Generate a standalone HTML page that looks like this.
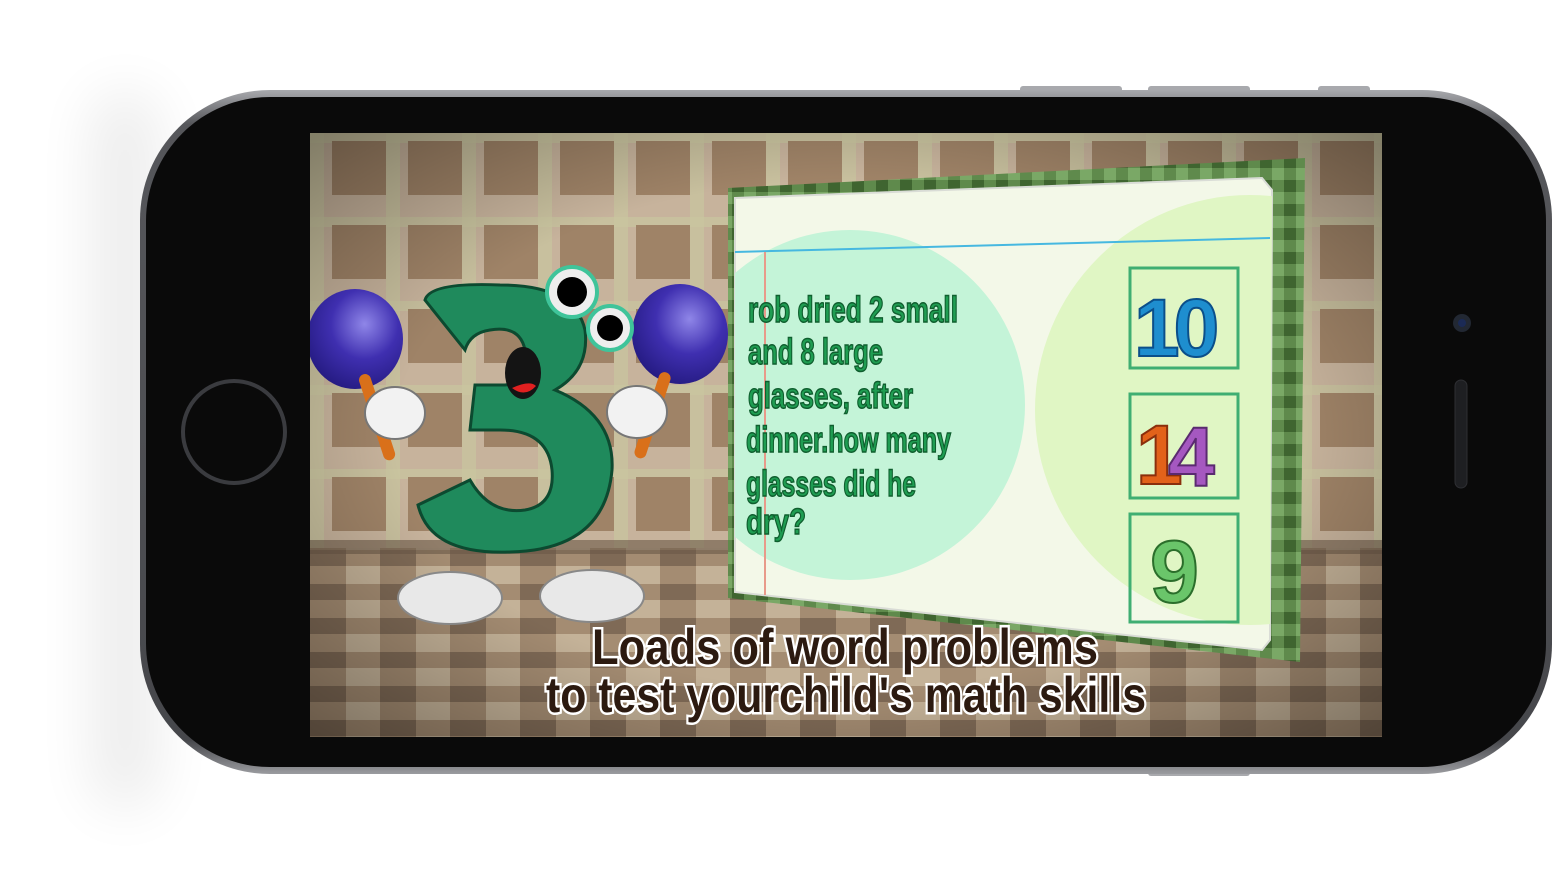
<!DOCTYPE html>
<html><head><meta charset="utf-8"><style>
html,body{margin:0;padding:0;background:#fff;width:1552px;height:884px;overflow:hidden}
svg{display:block}
</style></head><body>
<svg width="1552" height="884" viewBox="0 0 1552 884" xmlns="http://www.w3.org/2000/svg">
<defs>
<linearGradient id="body" x1="0" y1="0" x2="0" y2="1">
<stop offset="0" stop-color="#a8a9ad"/><stop offset="0.05" stop-color="#56575b"/><stop offset="0.95" stop-color="#46474b"/><stop offset="1" stop-color="#9a9b9f"/>
</linearGradient>
<pattern id="plaid" x="310" y="133" width="76" height="84" patternUnits="userSpaceOnUse">
<rect width="76" height="84" fill="#c7b39c"/>
<rect x="0" y="0" width="14" height="84" fill="#c9c6a0" opacity="0.7"/>
<rect x="0" y="0" width="76" height="10" fill="#c9c6a0" opacity="0.7"/>
<rect x="22" y="8" width="54" height="54" fill="#9f8367"/>
</pattern>
<pattern id="floor" x="310" y="550" width="70" height="34" patternUnits="userSpaceOnUse">
<rect width="70" height="34" fill="#a48c72"/>
<rect x="0" y="0" width="36" height="16" fill="#7f6a56"/>
<rect x="36" y="16" width="34" height="18" fill="#c4b298"/>
</pattern>
<pattern id="check" width="24" height="24" patternUnits="userSpaceOnUse">
<rect width="24" height="24" fill="#5f8a4c"/><rect width="12" height="12" fill="#7aa866"/><rect x="12" y="12" width="12" height="12" fill="#3f6530"/>
</pattern>
<radialGradient id="mar" cx="0.6" cy="0.35" r="0.7"><stop offset="0" stop-color="#8f86e8"/><stop offset="0.5" stop-color="#3f2fb0"/><stop offset="1" stop-color="#241a80"/></radialGradient>
<radialGradient id="vig" cx="0.5" cy="0.5" r="0.7"><stop offset="0.6" stop-color="#000" stop-opacity="0"/><stop offset="1" stop-color="#000" stop-opacity="0.35"/></radialGradient>
<filter id="blur" x="-100%" y="-20%" width="300%" height="140%"><feGaussianBlur stdDeviation="28"/></filter>
</defs>
<rect x="90" y="90" width="70" height="720" rx="35" fill="#000" opacity="0.07" filter="url(#blur)"/>
<rect x="1020" y="86" width="102" height="8" rx="3" fill="#a8a9ad"/>
<rect x="1148" y="86" width="102" height="8" rx="3" fill="#a8a9ad"/>
<rect x="1318" y="86" width="52" height="8" rx="3" fill="#a8a9ad"/>
<rect x="1148" y="768" width="102" height="8" rx="3" fill="#a8a9ad"/>
<rect x="140" y="90" width="1412" height="684" rx="130" fill="url(#body)"/>
<rect x="146" y="97" width="1400" height="670" rx="124" fill="#0a0a0a"/>
<circle cx="234" cy="432" r="51" fill="none" stroke="#3a3b3f" stroke-width="4"/>
<circle cx="1462" cy="323" r="9" fill="#222833"/><circle cx="1462" cy="323" r="4" fill="#1b2a55"/>
<rect x="1455" y="380" width="12" height="108" rx="6" fill="#1e1f22" stroke="#2e2f33"/>
<svg x="310" y="133" width="1072" height="604" viewBox="310 133 1072 604">
<rect x="310" y="133" width="1072" height="604" fill="url(#plaid)"/>
<polygon points="310,548 1382,548 1382,737 310,737" fill="url(#floor)"/>
<rect x="310" y="540" width="1072" height="14" fill="#6b5848" opacity="0.6"/>
<rect x="310" y="133" width="1072" height="604" fill="url(#vig)"/>
<polygon points="728,188 1305,158 1300,662 728,598" fill="url(#check)"/>
<polygon points="735,198 1262,178 1272,190 1270,640 1262,650 735,592" fill="#f3f8e8" stroke="#d9dcd6" stroke-width="2"/>
<clipPath id="bc"><polygon points="735,198 1262,178 1272,190 1270,640 1262,650 735,592"/></clipPath>
<g clip-path="url(#bc)">
<circle cx="850" cy="405" r="175" fill="#c4f4d8"/>
<circle cx="1250" cy="410" r="215" fill="#e0f6c4"/>
<line x1="735" y1="252" x2="1270" y2="238" stroke="#46b8e0" stroke-width="2"/>
<line x1="765" y1="252" x2="765" y2="595" stroke="#e89a8a" stroke-width="2"/>
</g>
<g font-family="Liberation Sans Narrow, Liberation Sans, sans-serif" font-weight="bold" fill="#1f9d52" stroke="#0f5e2e" stroke-width="1.5" font-size="36">
<text x="748" y="322" textLength="210" lengthAdjust="spacingAndGlyphs">rob dried 2 small</text>
<text x="748" y="364" textLength="135" lengthAdjust="spacingAndGlyphs">and 8 large</text>
<text x="748" y="408" textLength="165" lengthAdjust="spacingAndGlyphs">glasses, after</text>
<text x="746" y="452" textLength="205" lengthAdjust="spacingAndGlyphs">dinner.how many</text>
<text x="746" y="496" textLength="170" lengthAdjust="spacingAndGlyphs">glasses did he</text>
<text x="746" y="534" textLength="60" lengthAdjust="spacingAndGlyphs">dry?</text>
</g>
<g fill="none" stroke="#3fae72" stroke-width="3">
<rect x="1130" y="268" width="108" height="100"/>
<rect x="1130" y="394" width="108" height="104"/>
<rect x="1130" y="514" width="108" height="108"/>
</g>
<g font-family="Liberation Sans, sans-serif" font-weight="bold" font-size="82">
<text x="1134" y="356" fill="#1e8ecf" stroke="#0b4f8a" stroke-width="2" letter-spacing="-6">10</text>
<text x="1136" y="484" fill="#e2621a" stroke="#8a2f0c" stroke-width="2" font-size="84">1</text>
<text x="1168" y="486" fill="#a558c0" stroke="#5a2a70" stroke-width="2" font-size="84">4</text>
<text x="1150" y="602" fill="#6ac56a" stroke="#2b6e2b" stroke-width="2" font-size="88">9</text>
</g>
<ellipse cx="450" cy="598" rx="52" ry="26" fill="#e8e8e8" stroke="#888" stroke-width="2"/>
<ellipse cx="592" cy="596" rx="52" ry="26" fill="#e8e8e8" stroke="#888" stroke-width="2"/>
<ellipse cx="355" cy="339" rx="48" ry="50" fill="url(#mar)"/>
<ellipse cx="680" cy="334" rx="48" ry="50" fill="url(#mar)"/>
<rect x="372" y="372" width="12" height="90" rx="6" fill="#d9701a" transform="rotate(-18 378 420)"/>
<rect x="645" y="370" width="12" height="90" rx="6" fill="#d9701a" transform="rotate(18 651 420)"/>
<path d="M425,300 Q430,282 500,285 Q575,285 585,330 Q590,370 555,390 Q615,415 612,470 Q605,550 510,552 Q430,555 418,505 L470,480 Q490,515 525,510 Q555,505 552,470 Q548,430 500,430 L470,430 L475,385 L505,385 Q530,382 525,350 Q520,325 490,330 Q470,333 465,350 Z" fill="#1f8a5c" stroke="#0c4a30" stroke-width="3"/>
<ellipse cx="523" cy="373" rx="18" ry="26" fill="#141414"/>
<path d="M512,388 Q525,398 536,386 Q530,380 512,388Z" fill="#e02020"/>
<circle cx="572" cy="292" r="25" fill="#eee" stroke="#3fc49a" stroke-width="4"/><circle cx="572" cy="292" r="15" fill="#000"/>
<circle cx="610" cy="328" r="22" fill="#eee" stroke="#3fc49a" stroke-width="4"/><circle cx="610" cy="328" r="13" fill="#000"/>
<ellipse cx="395" cy="413" rx="30" ry="26" fill="#f2f2f2" stroke="#777" stroke-width="2"/>
<ellipse cx="637" cy="412" rx="30" ry="26" fill="#f2f2f2" stroke="#777" stroke-width="2"/>
<g font-family="Liberation Sans Narrow, Liberation Sans, sans-serif" font-weight="bold" fill="#2c1a10" stroke="#fff" stroke-width="5" paint-order="stroke" font-size="50">
<text x="592" y="664" textLength="506" lengthAdjust="spacingAndGlyphs">Loads of word problems</text>
<text x="546" y="712" textLength="600" lengthAdjust="spacingAndGlyphs">to test yourchild's math skills</text>
</g>
</svg>
</svg>
</body></html>
